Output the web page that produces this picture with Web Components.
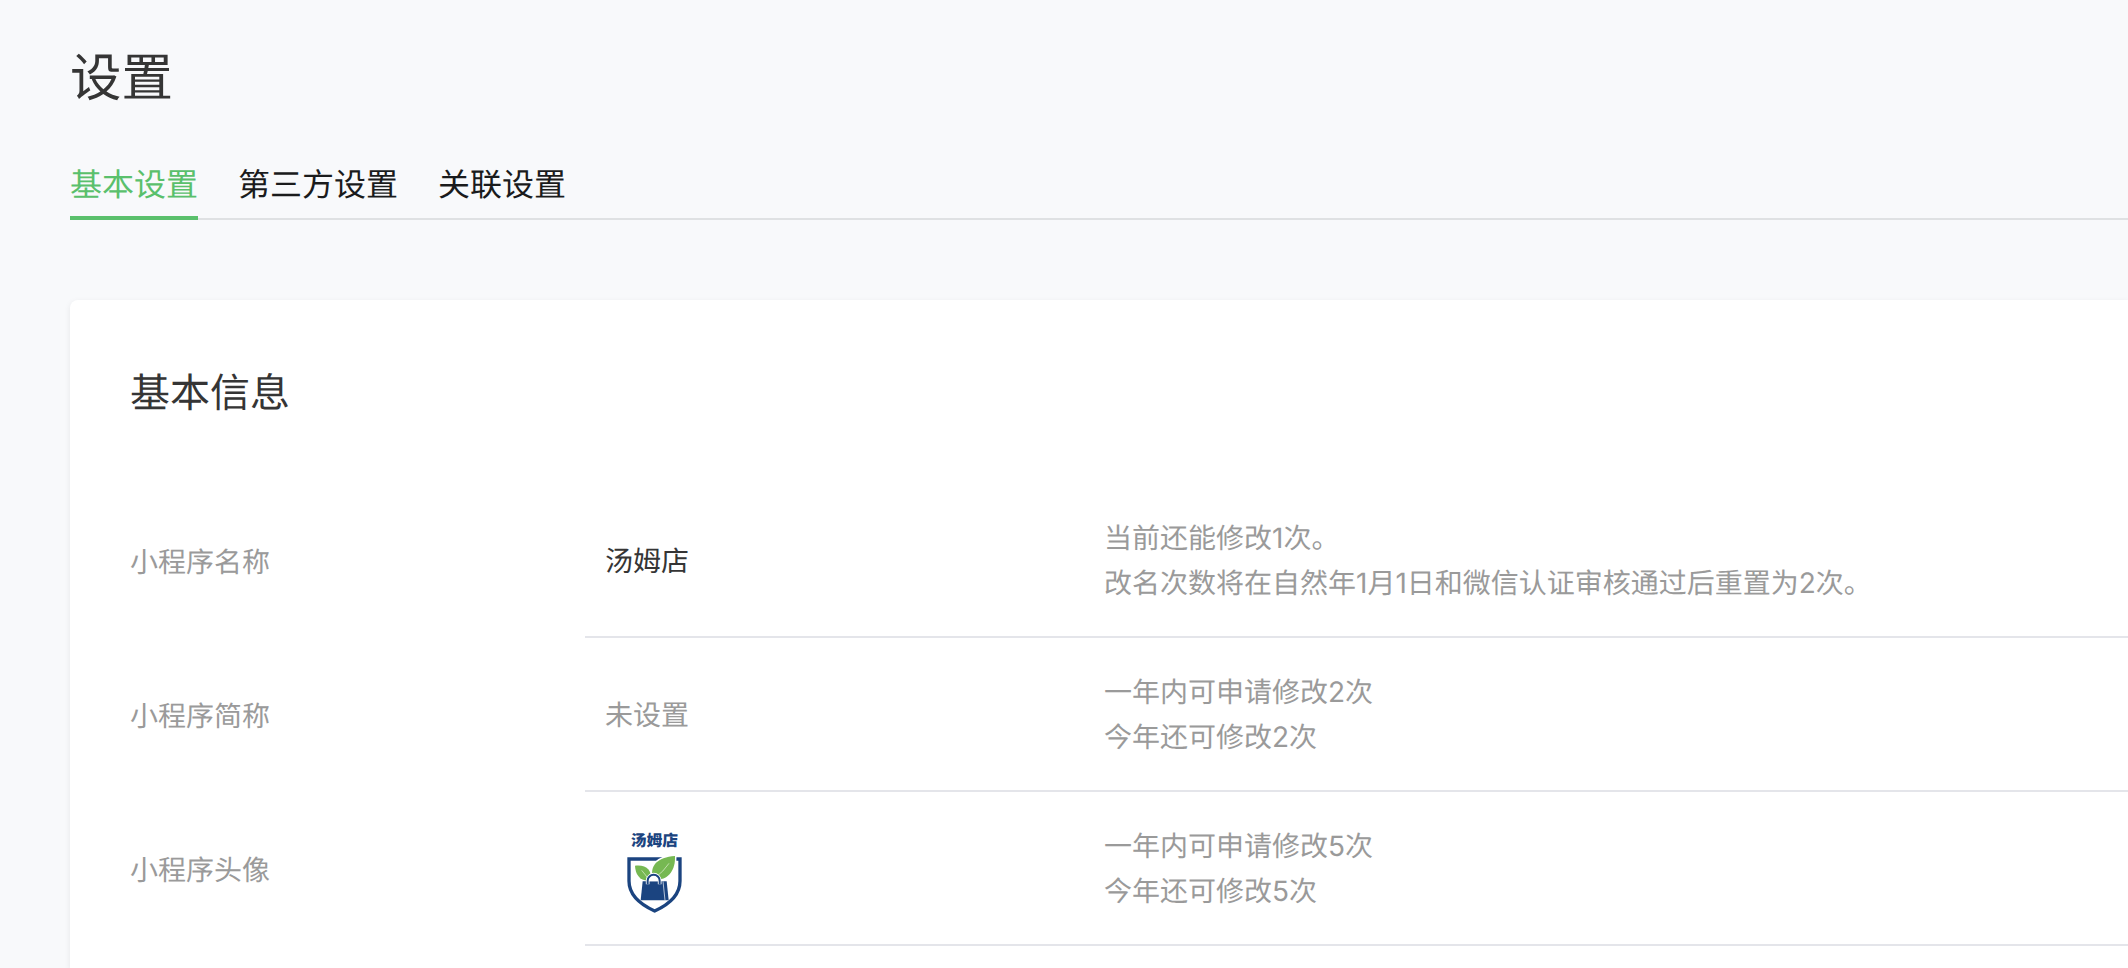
<!DOCTYPE html>
<html lang="zh-CN">
<head>
<meta charset="utf-8">
<title>设置</title>
<style>
  html, body {
    margin: 0;
    height: 100%;
    overflow: hidden;
    background: #f8f9fb;
    font-family: Inter, "Noto Sans CJK SC", sans-serif;
    text-rendering: geometricPrecision;
  }
</style>
</head>
<body>
<settings-page heading="设置">
  <tab-bar slot="tabs">
    <tab-item active>基本设置</tab-item>
    <tab-item>第三方设置</tab-item>
    <tab-item>关联设置</tab-item>
  </tab-bar>
  <info-card heading="基本信息">
    <info-row label="小程序名称">
      汤姆店
      <div slot="tips">当前还能修改1次。</div>
      <div slot="tips">改名次数将在自然年1月1日和微信认证审核通过后重置为2次。</div>
    </info-row>
    <info-row label="小程序简称" empty>
      未设置
      <div slot="tips">一年内可申请修改2次</div>
      <div slot="tips">今年还可修改2次</div>
    </info-row>
    <info-row label="小程序头像">
      <shop-logo></shop-logo>
      <div slot="tips">一年内可申请修改5次</div>
      <div slot="tips">今年还可修改5次</div>
    </info-row>
  </info-card>
</settings-page>

<script>
class SettingsPage extends HTMLElement {
  constructor () {
    super()
    this.shadowDOM = this.attachShadow({ mode: 'open' })
  }

  connectedCallback () {
    this.shadowDOM.innerHTML = `
      <style>
        :host {
          display: flex;
          flex-direction: column;
          box-sizing: border-box;
          min-height: 100vh;
          padding: 40px 0 0 70px;
        }
        h1 {
          margin: 0;
          font-size: 51.5px;
          font-weight: 400;
          line-height: 76px;
          color: #353535;
        }
        main {
          display: flex;
          flex: 1;
          margin-top: 80px;
        }
      </style>
      <h1>${this.getAttribute('heading')}</h1>
      <slot name="tabs"></slot>
      <main><slot></slot></main>
    `
  }
}
customElements.define('settings-page', SettingsPage)

class TabBar extends HTMLElement {
  constructor () {
    super()
    this.attachShadow({ mode: 'open' }).innerHTML = `
      <style>
        :host {
          display: flex;
          gap: 40px;
          height: 104px;
          align-items: flex-end;
          background: linear-gradient(#dfe1e3, #dfe1e3) left bottom / 100% 2px no-repeat;
        }
      </style>
      <slot></slot>
    `
  }
}
customElements.define('tab-bar', TabBar)

class TabItem extends HTMLElement {
  constructor () {
    super()
    this.attachShadow({ mode: 'open' }).innerHTML = `
      <style>
        :host {
          display: block;
          padding-bottom: 8px;
          border-bottom: 4px solid transparent;
          font-size: 32px;
          line-height: 46px;
          color: #1a1b1c;
        }
        :host([active]) {
          color: #5ac06c;
          border-color: #5ac06c;
        }
      </style>
      <slot></slot>
    `
  }
}
customElements.define('tab-item', TabItem)

class InfoCard extends HTMLElement {
  constructor () {
    super()
    this.shadowDOM = this.attachShadow({ mode: 'open' })
  }

  connectedCallback () {
    this.shadowDOM.innerHTML = `
      <style>
        :host {
          display: block;
          flex: 1;
          padding: 63px 0 0 60px;
          border-top-left-radius: 8px;
          background: #fff;
          box-shadow: 0 2px 6px rgba(0, 0, 0, .08);
        }
        h2 {
          margin: 0 0 61px;
          font-size: 40px;
          font-weight: 400;
          line-height: 60px;
          color: #353535;
        }
      </style>
      <h2>${this.getAttribute('heading')}</h2>
      <slot></slot>
    `
  }
}
customElements.define('info-card', InfoCard)

class InfoRow extends HTMLElement {
  constructor () {
    super()
    this.shadowDOM = this.attachShadow({ mode: 'open' })
  }

  connectedCallback () {
    this.shadowDOM.innerHTML = `
      <style>
        :host {
          display: flex;
          height: 154px;
          align-items: stretch;
          font-size: 28px;
          line-height: 45px;
          color: #9a9a9a;
        }
        .label {
          display: flex;
          align-items: center;
          width: 455px;
          padding-top: 2px;
          box-sizing: border-box;
        }
        .content {
          display: flex;
          flex: 1;
          align-items: center;
          box-sizing: border-box;
          padding: 2px 0 0 20px;
          border-bottom: 2px solid #e4e5ea;
        }
        .value {
          width: 499px;
          color: #353535;
        }
        :host([empty]) .value {
          color: #9a9a9a;
        }
      </style>
      <div class="label">${this.getAttribute('label')}</div>
      <div class="content">
        <div class="value"><slot></slot></div>
        <div><slot name="tips"></slot></div>
      </div>
    `
  }
}
customElements.define('info-row', InfoRow)

class ShopLogo extends HTMLElement {
  constructor () {
    super()
    this.attachShadow({ mode: 'open' }).innerHTML = `
      <style>
        :host {
          display: block;
          width: 100px;
          height: 100px;
        }
        svg {
          display: block;
        }
        text {
          font: 900 47px "Noto Sans CJK SC", sans-serif;
        }
      </style>
      <svg width="100" height="100" viewBox="15 -6 300 300">
        <text x="92" y="76" textLength="142" lengthAdjust="spacingAndGlyphs" fill="#1b4480">汤姆店</text>
        <path d="M87 114H240V180C240 222 208 250 164 270C120 250 87 222 87 180Z" fill="#fff" stroke="#1b4480" stroke-width="10"/>
        <path d="M160 172C146 136 172 108 225 105C227 146 204 182 160 172ZM105 134C136 129 160 146 150 180C122 180 106 162 105 134Z" fill="#fff" stroke="#fff" stroke-width="9"/>
        <path d="M160 174C146 136 172 108 225 105C227 150 202 182 160 174Z" fill="#76b852"/>
        <path d="M105 134C136 129 160 148 150 178C122 182 106 162 105 134Z" fill="#76b852"/>
        <path d="M167 169Q190 152 207 127M145 174Q137 162 125 148" fill="none" stroke="#e5f2d8" stroke-width="2"/>
        <path d="M128 181H200L206 238H122Z" fill="#1b4480"/>
        <path d="M189 181L195 238" stroke="#fff" stroke-width="2"/>
        <path d="M143 190V179A18 18 0 0 1 179 179V190" fill="none" stroke="#fff" stroke-width="11"/>
        <path d="M143 181V179A18 18 0 0 1 179 179V181Z" fill="#fff"/>
        <path d="M143 190V179A18 18 0 0 1 179 179V190" fill="none" stroke="#1b4480" stroke-width="6"/>
      </svg>
    `
  }
}
customElements.define('shop-logo', ShopLogo)
</script>
</body>
</html>
